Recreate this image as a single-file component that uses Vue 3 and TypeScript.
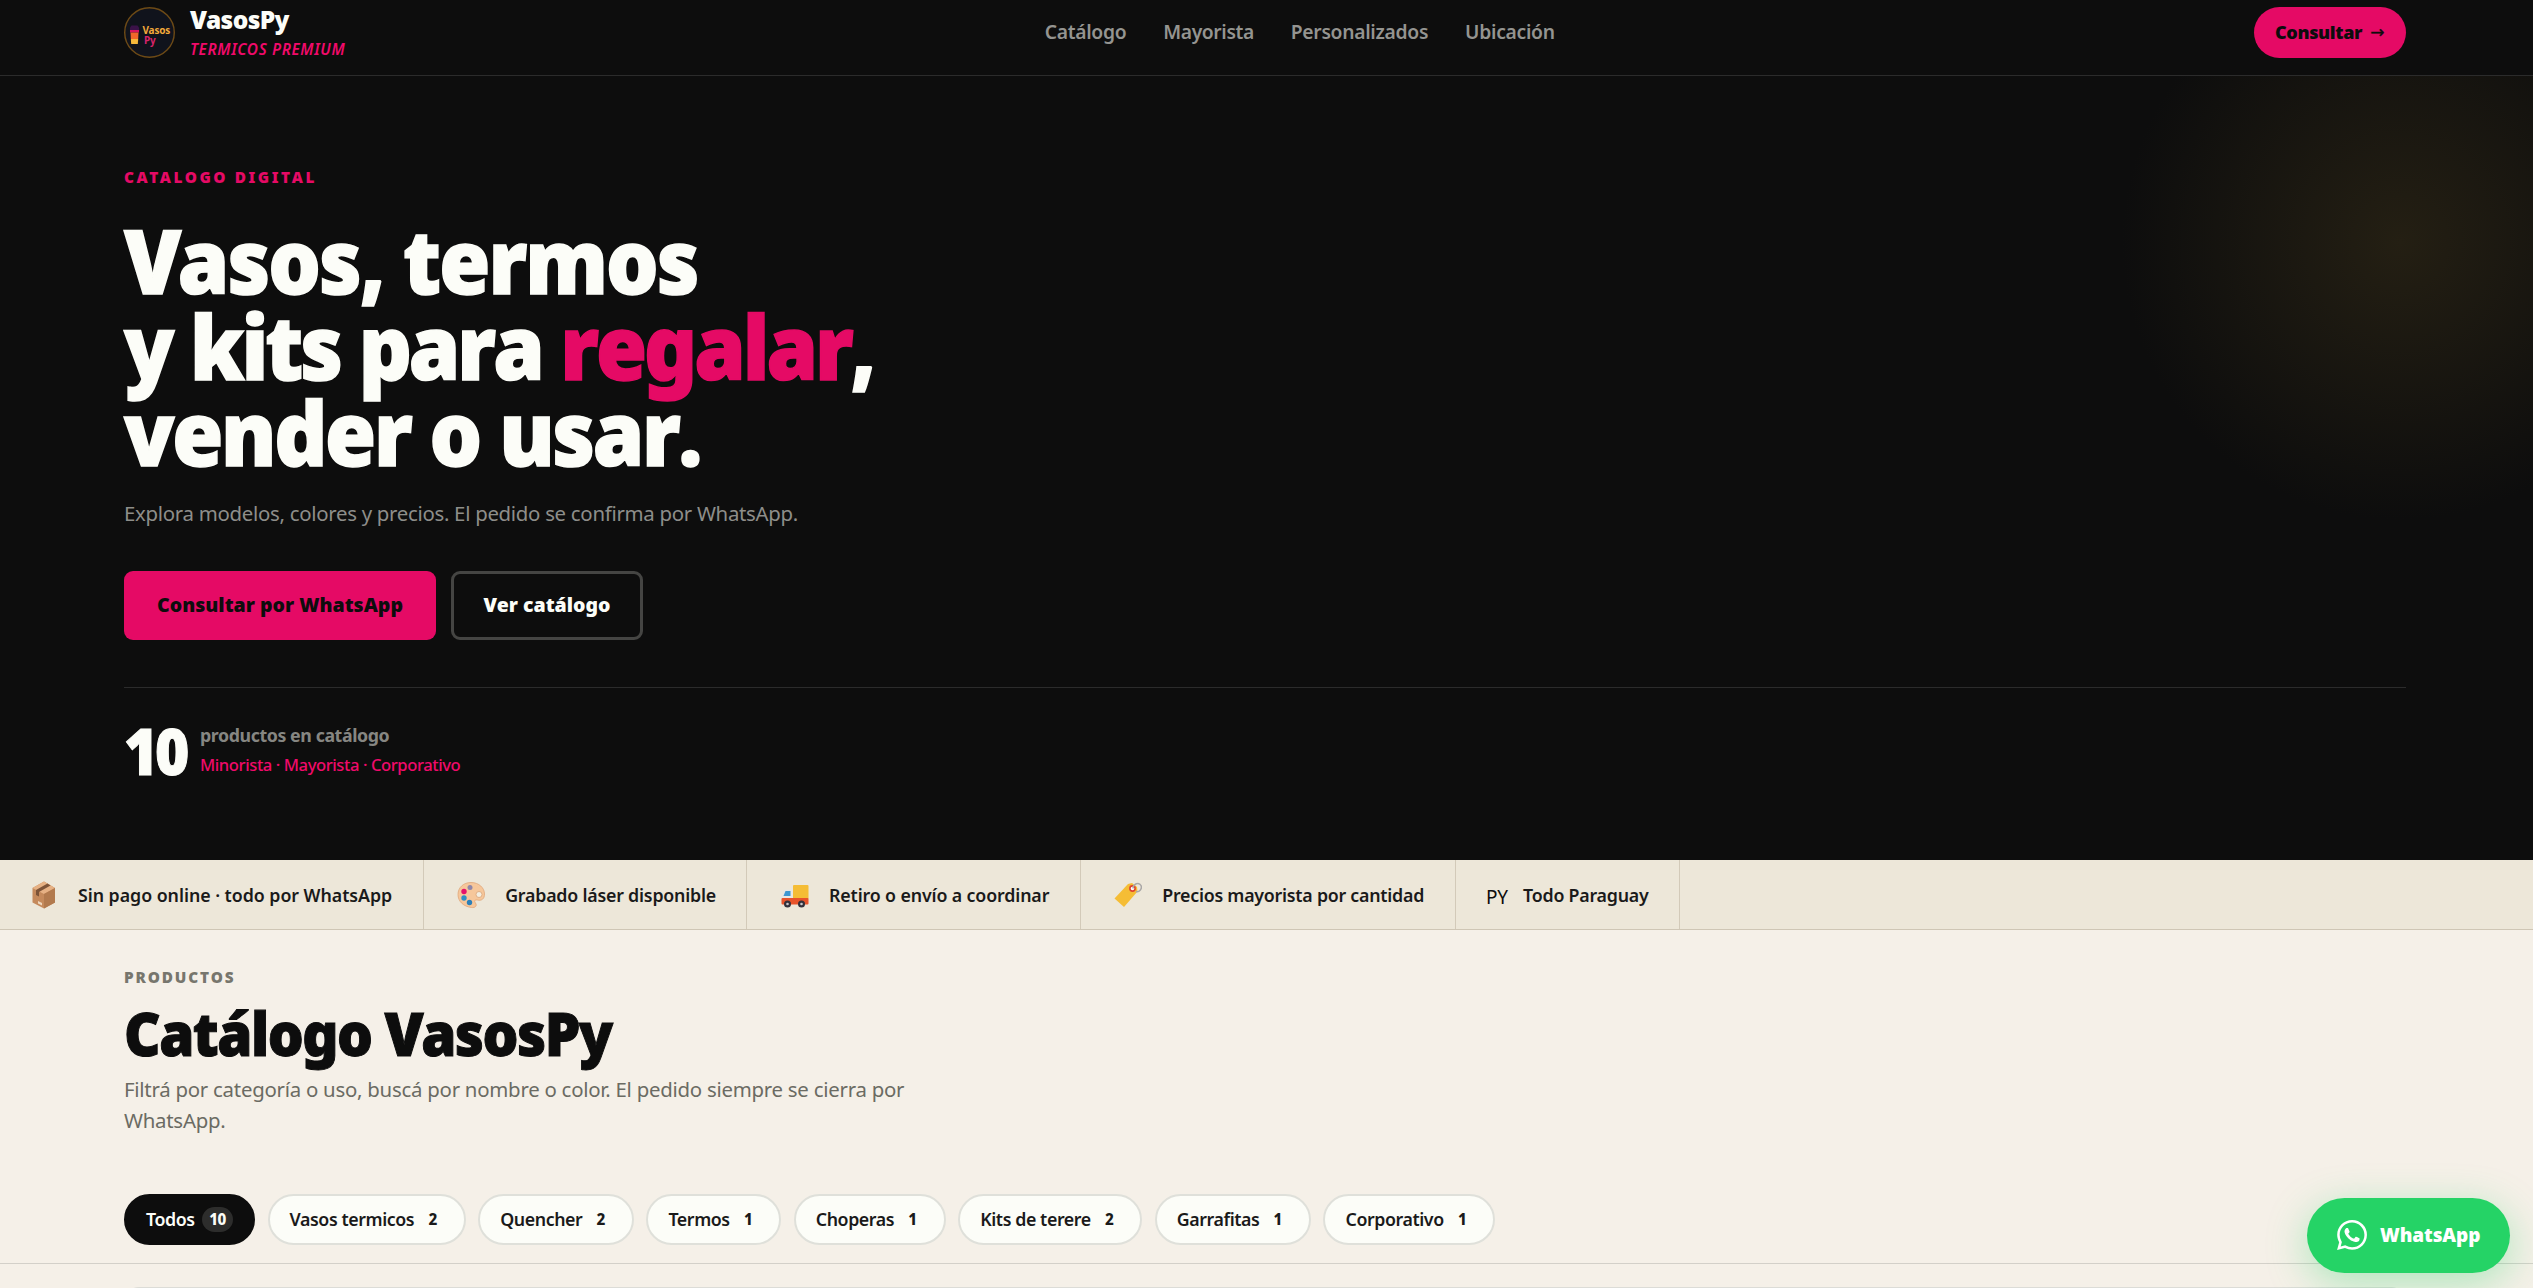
<script setup lang="ts">
import { ref } from 'vue'

interface Category {
  name: string
  count: number
}

const nav: string[] = ['Catálogo', 'Mayorista', 'Personalizados', 'Ubicación']

const categories: Category[] = [
  { name: 'Todos', count: 10 },
  { name: 'Vasos termicos', count: 2 },
  { name: 'Quencher', count: 2 },
  { name: 'Termos', count: 1 },
  { name: 'Choperas', count: 1 },
  { name: 'Kits de terere', count: 2 },
  { name: 'Garrafitas', count: 1 },
  { name: 'Corporativo', count: 1 },
]
const active = ref('Todos')
</script>

<template>
  <div class="page">
    <header class="top">
      <div class="brand">
        <svg class="logo" viewBox="0 0 51 51">
          <circle cx="25.500" cy="25.500" r="24.800" fill="#10131c" stroke="#6d4a16" stroke-width="1.400" />
          <path d="M6 20.500 L7.500 18.500 H13.500 L15 20.500 V23 H6 Z" fill="#3a1248" />
          <path d="M6 23 H15 V25.500 H6 Z" fill="#d9145e" />
          <path d="M6.500 25.500 H14.500 L14.200 32 H6.800 Z" fill="#f2672a" />
          <path d="M6.800 32 H14.200 L13.800 37 H7.200 Z" fill="#f6b83a" />
          <text x="18.500" y="27.300" class="lg" fill="#f2a93a">Vasos</text>
          <text x="20" y="36.500" class="lg" fill="#d8246a">Py</text>
        </svg>
        <div class="brand-text">
          <span class="name">VasosPy</span>
          <span class="tag">TERMICOS PREMIUM</span>
        </div>
      </div>
      <nav>
        <a v-for="n in nav" :key="n">{{ n }}</a>
      </nav>
      <a class="cta">Consultar <span class="arrow">→</span></a>
    </header>

    <section class="hero">
      <div class="eyebrow">CATALOGO DIGITAL</div>
      <h1>
        <span class="l l1">Vasos, termos</span>
        <span class="l l2">y kits para <em>regalar</em>,</span>
        <span class="l l3">vender o usar.</span>
      </h1>
      <p class="lead">Explora modelos, colores y precios. El pedido se confirma por WhatsApp.</p>
      <div class="actions">
        <a class="primary">Consultar por WhatsApp</a>
        <a class="ghost">Ver catálogo</a>
      </div>
      <div class="stats">
        <span class="num">10</span>
        <div class="stat-text">
          <span class="s1">productos en catálogo</span>
          <span class="s2">Minorista · Mayorista · Corporativo</span>
        </div>
      </div>
    </section>

    <section class="perks">
      <div class="perk">
        <i><svg width="28" height="28" viewBox="0 0 28 28">
          <path d="M14 .5 L25 7 V21.500 L14 27.500 L2.500 21.500 V7 Z" fill="#c58a5c" />
          <path d="M14 .5 L25 7 L14 13 L2.500 7 Z" fill="#e6b184" />
          <path d="M14 13 L25 7 V21.500 L14 27.500 Z" fill="#b27a4e" />
          <path d="M17.500 2.500 L20.500 4.500 L9 11 V15.500 L6 14 V9 Z" fill="#7d5438" />
          <path d="M8 20 l4 2 v2.500 l-4 -2 Z" fill="#eed7be" />
        </svg></i>
        <b>Sin pago online · todo por WhatsApp</b>
      </div>
      <div class="perk">
        <i><svg width="28" height="28" viewBox="0 0 28 28">
          <path d="M14 1.500 C22 1.500 27.500 7 27.500 13 C27.500 18 24.500 20 20.500 19 C17.500 18.500 17 20 18.500 22 C20.500 25 18 27 14.500 26.500 C6.500 25.500 1 20.500 1 13.500 C1 6.500 6.500 1.500 14 1.500 Z" fill="#f6c79b" stroke="#dfa678" stroke-width=".8" />
          <circle cx="22" cy="13.500" r="3" fill="#f3eee2" stroke="#d9a377" stroke-width=".8" />
          <circle cx="13" cy="6.500" r="2.500" fill="#8f86a8" />
          <circle cx="7" cy="10.500" r="2.700" fill="#e5126b" />
          <circle cx="7" cy="17" r="2.700" fill="#2f8fc4" />
          <circle cx="12.500" cy="21.500" r="2.700" fill="#2b7fb8" />
        </svg></i>
        <b>Grabado láser disponible</b>
      </div>
      <div class="perk">
        <i><svg width="28" height="28" viewBox="0 0 28 28">
          <rect x="12" y="4" width="15.500" height="14" rx="1" fill="#f5bd35" />
          <path d="M3.500 8.500 H12 V18 H.5 V15 Z" fill="#e9e7e2" />
          <path d="M4.500 10 H9.500 V15 H2.500 Z" fill="#3e97d0" />
          <rect x=".5" y="17" width="27" height="6.500" rx="1" fill="#e8532a" />
          <circle cx="6.500" cy="23" r="3.500" fill="#33303a" /><circle cx="6.500" cy="23" r="1.300" fill="#c9c6ca" />
          <circle cx="20.500" cy="23" r="3.500" fill="#33303a" /><circle cx="20.500" cy="23" r="1.300" fill="#c9c6ca" />
        </svg></i>
        <b>Retiro o envío a coordinar</b>
      </div>
      <div class="perk">
        <i><svg width="28" height="28" viewBox="0 0 28 28">
          <path d="M14 3 L18 2 L23 6 L23.500 10.500 L10 26 L.5 17.500 Z" fill="#f5bd35" />
          <circle cx="18.500" cy="7.500" r="2.600" fill="#fff" stroke="#e0432d" stroke-width="1.600" />
          <path d="M19 7.500 C19 3 25 .5 27 4.500 C28.500 8 25 11.500 22 10.500" fill="none" stroke="#a9a7a6" stroke-width="1.500" />
        </svg></i>
        <b>Precios mayorista por cantidad</b>
      </div>
      <div class="perk">
        <i class="py">PY</i>
        <b>Todo Paraguay</b>
      </div>
    </section>

    <section class="catalog">
      <div class="kicker">PRODUCTOS</div>
      <h2>Catálogo VasosPy</h2>
      <p class="sub">Filtrá por categoría o uso, buscá por nombre o color. El pedido siempre se cierra por<br />WhatsApp.</p>
      <div class="pills">
        <button v-for="c in categories" :key="c.name" class="pill" :class="{ on: c.name === active }" @click="active = c.name">
          <span class="t">{{ c.name }}</span><span class="c">{{ c.count }}</span>
        </button>
      </div>
    </section>
    <div class="results"><div class="card"></div></div>

    <a class="wa">
      <svg width="30" height="30" viewBox="0 0 24 24" fill="#fff">
        <path d="M17.472 14.382c-.297-.149-1.758-.867-2.030-.967-.273-.099-.471-.148-.670.150-.197.297-.767.966-.940 1.164-.173.199-.347.223-.644.075-.297-.150-1.255-.463-2.390-1.475-.883-.788-1.480-1.761-1.653-2.059-.173-.297-.018-.458.130-.606.134-.133.298-.347.446-.520.149-.174.198-.298.298-.497.099-.198.050-.371-.025-.520-.075-.149-.669-1.612-.916-2.207-.242-.579-.487-.500-.669-.510-.173-.008-.371-.010-.570-.010-.198 0-.520.074-.792.372-.272.297-1.040 1.016-1.040 2.479 0 1.462 1.065 2.875 1.213 3.074.149.198 2.096 3.200 5.077 4.487.709.306 1.262.489 1.694.625.712.227 1.360.195 1.871.118.571-.085 1.758-.719 2.006-1.413.248-.694.248-1.289.173-1.413-.074-.124-.272-.198-.570-.347m-5.421 7.403h-.004a9.870 9.870 0 01-5.031-1.378l-.361-.214-3.741.982.998-3.648-.235-.374a9.860 9.860 0 01-1.510-5.260c.001-5.450 4.436-9.884 9.888-9.884 2.640 0 5.122 1.030 6.988 2.898a9.825 9.825 0 012.893 6.994c-.003 5.450-4.437 9.884-9.885 9.884m8.413-18.297A11.815 11.815 0 0012.050 0C5.495 0 .160 5.335.157 11.892c0 2.096.547 4.142 1.588 5.945L.057 24l6.305-1.654a11.882 11.882 0 005.683 1.448h.005c6.554 0 11.890-5.335 11.893-11.893a11.821 11.821 0 00-3.480-8.413z" />
      </svg>
      <span>WhatsApp</span>
    </a>
  </div>
</template>

<style>
body { background: #f5f0e8; overflow: hidden; }
</style>

<style scoped>
.page { position: relative; height: 1288px; overflow: hidden; background: #f5f0e8; font-family: "Noto Sans", "Open Sans", sans-serif; color: #0d0d0d; }
.page * { box-sizing: border-box; }
span, a, b, h1, h2 { white-space: nowrap; }
.top { display: flex; justify-content: space-between; align-items: flex-start; height: 76px; padding: 7px 127px 0 124px; background: #0d0d0d; border-bottom: 1px solid #2b2b2b; }
.brand { display: flex; gap: 15px; }
.logo { width: 51px; height: 51px; }
.lg { font: 700 10px "Noto Sans", sans-serif; letter-spacing: -.2px; }
.brand-text { display: flex; flex-direction: column; align-items: flex-start; gap: 7px; }
.name { font-size: 24.500px; line-height: 25px; font-weight: 900; color: #fcfdf8; letter-spacing: -.6px; }
.tag { font-size: 15.300px; line-height: 20px; font-weight: 600; font-style: italic; color: #f00a6a; letter-spacing: .65px; }
nav { display: flex; gap: 37px; height: 50px; align-items: center; }
nav a { font-size: 19.300px; line-height: 26px; font-weight: 600; color: #949490; letter-spacing: -.3px; }
nav a:nth-child(2) { letter-spacing: -.4px; }
.cta { display: flex; align-items: center; gap: 8px; width: 152px; height: 51px; padding: 0 0 1px 21px; border-radius: 26px; background: #e50a65; font-size: 18px; font-weight: 900; letter-spacing: -.35px; }
.arrow { font: 400 17px/20px "DejaVu Sans", sans-serif; -webkit-text-stroke: .3px #0d0d0d; }
.hero { height: 784px; padding: 91px 127px 0 124px; background: radial-gradient(circle 278px at 2400px 166px, #241f13 0, #0d0d0d 100%), #0d0d0d; }
.eyebrow { font-size: 15.300px; line-height: 20px; font-weight: 900; color: #e50a65; letter-spacing: 2.600px; }
h1 { margin: 30px 0 0; font-size: 88px; line-height: 86px; font-weight: 900; color: #fcfdf8; -webkit-text-stroke: 1.500px #fcfdf8; }
.l { display: block; transform: scaleX(.94); transform-origin: left; }
.l1 { letter-spacing: -2.050px; }
.l2 { font-kerning: none; letter-spacing: -3.200px; }
.l3 { font-kerning: none; letter-spacing: -2.450px; }
h1 em { font-style: normal; color: #e50a65; -webkit-text-stroke-color: #e50a65; }
.lead { margin: 21px 0 0; font-size: 20.400px; line-height: 34px; color: #8e8e8a; letter-spacing: -.29px; }
.actions { display: flex; gap: 15px; margin-top: 41px; }
.actions a { height: 69px; border-radius: 9px; font-size: 19.500px; line-height: 67px; font-weight: 900; text-align: center; }
.actions .primary { width: 312px; background: #e50a65; }
.actions .ghost { width: 192px; border: 3px solid #454543; line-height: 61px; color: #fcfdf8; }
.stats { display: flex; gap: 13px; margin-top: 47px; padding-top: 31px; border-top: 1px solid #2b2b2b; }
.num { width: 63px; font-size: 63px; line-height: 64px; font-weight: 900; color: #fcfdf8; letter-spacing: -3.600px; transform: scaleX(.93); transform-origin: left; -webkit-text-stroke: 1px #fcfdf8; }
.stat-text { display: flex; flex-direction: column; align-items: flex-start; padding-top: 1px; }
.s1 { font-size: 17.800px; line-height: 30px; font-weight: 700; color: #868682; letter-spacing: -.42px; }
.s2 { font-size: 16.600px; line-height: 29px; font-weight: 500; color: #f00a6a; letter-spacing: -.42px; }
.perks { display: flex; height: 70px; background: #ede7d9; border-bottom: 1px solid #cfc6b5; }
.perk { display: flex; align-items: center; padding: 0 30.500px; border-right: 1px solid #d3cab9; letter-spacing: -.21px; }
.perk:first-child { padding-left: 27px; letter-spacing: -.04px; }
.perk:nth-child(3) { letter-spacing: -.13px; }
.perk:nth-child(4) { letter-spacing: -.24px; }
.perk i { display: flex; width: 51px; padding-left: 3px; font-style: normal; }
.perk i.py { width: 37px; padding: 4px 0 0; font-size: 19px; line-height: 26px; }
.perk b { font-size: 17.800px; line-height: 26px; font-weight: 600; color: #1a1a1a; }
.catalog { height: 334px; padding: 37px 124px 0; border-bottom: 1px solid #d3d0c9; }
.kicker { font-size: 15.300px; line-height: 20px; font-weight: 900; letter-spacing: 1.850px; color: #77766d; }
h2 { margin: 14px 0 0; font-size: 59.500px; line-height: 64px; font-weight: 900; letter-spacing: -1.620px; transform: scaleX(.95); transform-origin: left; -webkit-text-stroke: 1px #0d0d0d; }
.sub { margin: 9px 0 0; font-size: 20.400px; line-height: 31px; color: #6b6b63; letter-spacing: -.25px; }
.pills { display: flex; gap: 12.400px; margin-top: 58px; }
.pill { display: flex; align-items: center; gap: 7px; height: 51px; padding: 0 20px; border: 2px solid #dfe0da; border-radius: 26px; background: #fcfdf8; font: 600 17.800px/25px "Noto Sans", sans-serif; color: #1a1a1a; letter-spacing: -.42px; }
.c { padding: 0 7.200px; border-radius: 13px; font-size: 15.200px; font-weight: 800; line-height: 25px; letter-spacing: -.5px; }
.on { background: #0d0d0d; border-color: #0d0d0d; color: #fcfdf8; }
.on .c { padding: 0 7.500px; background: #2d2d2c; }
.results { padding: 23px 127px 0 124px; }
.card { height: 60px; border: 2px solid #dcdcd7; border-radius: 15px; background: #fcfdf8; }
.wa { position: absolute; left: 2307px; top: 1198px; display: flex; align-items: center; width: 203px; height: 75px; padding: 0 0 1px 30px; gap: 13px; border-radius: 38px; background: #25d366; box-shadow: 0 10px 40px rgba(37, 211, 102, .35); color: #fff; font-size: 19px; font-weight: 900; letter-spacing: -.1px; }
</style>
